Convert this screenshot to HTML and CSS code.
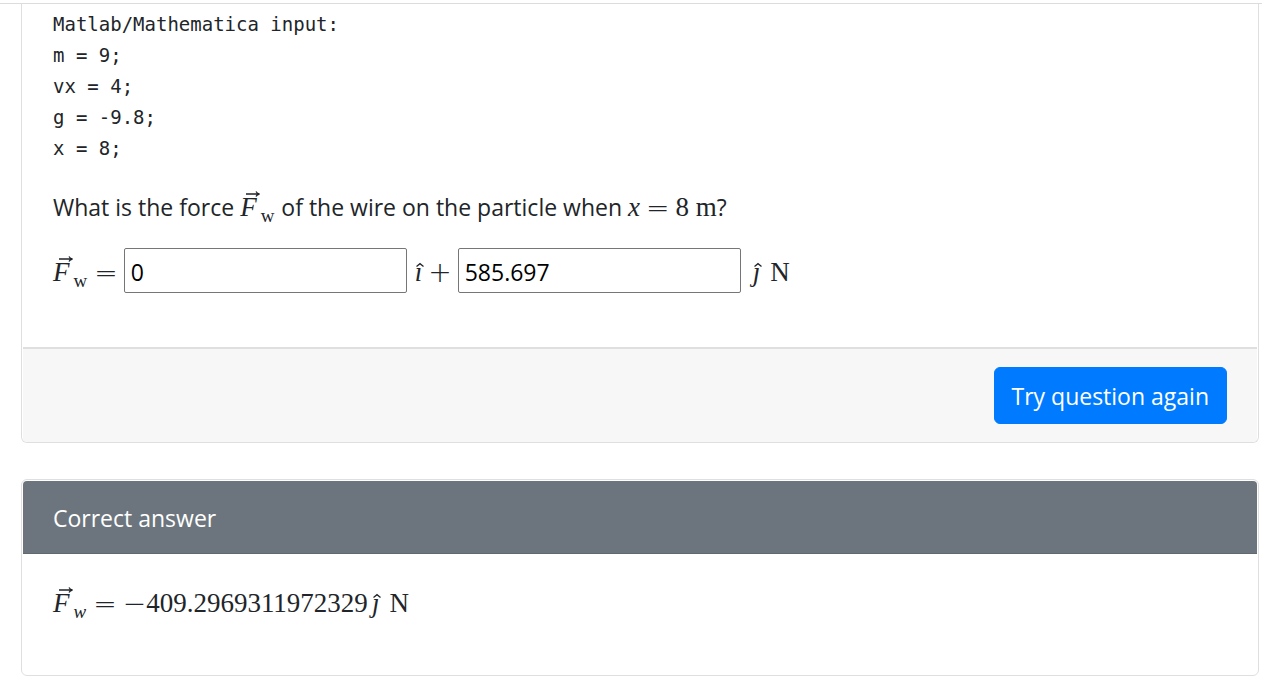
FILE: index.html
```html
<!DOCTYPE html>
<html lang="en">
<head>
    <meta charset="UTF-8">
    <meta name="viewport" content="width=device-width, initial-scale=1.0">
    <title>Question</title>
    <link rel="stylesheet" href="styles.css">
</head>
<body>

    <div class="top-bar"></div>

    <main class="content">
        <form class="card question-card">
            <div class="card-body">
<pre class="code-input">Matlab/Mathematica input:
m = 9;
vx = 4;
g = -9.8;
x = 8;</pre>
                <p class="prompt">What is the force <span class="math"><span class="accent"><i>F</i><svg class="vec" viewBox="0 0 14 6"><path d="M0 3H13M10 0.5Q11 2.5 13.5 3Q11 3.5 10 5.5"/></svg></span><sub>w</sub></span> of the wire on the particle when <span class="math"><i>x</i><span class="rel">=</span>8 m</span>?</p>

                <div class="answer-row">
                    <label class="math" for="force-x"><span class="accent"><i>F</i><svg class="vec" viewBox="0 0 14 6"><path d="M0 3H13M10 0.5Q11 2.5 13.5 3Q11 3.5 10 5.5"/></svg></span><sub>w</sub><span class="rel">=</span></label>
                    <input type="text" id="force-x" value="0">
                    <label class="math unit" for="force-y"><span class="accent"><i>ı</i><svg class="hat" viewBox="0 0 8 4"><path d="M0.5 3.5L4 0.7L7.5 3.5"/></svg></span><span class="rel">+</span></label>
                    <input type="text" id="force-y" value="585.697">
                    <span class="math unit"><span class="accent dotless-j"><i>ȷ</i><svg class="hat" viewBox="0 0 8 4"><path d="M0.5 3.5L4 0.7L7.5 3.5"/></svg></span><span class="newton">N</span></span>
                </div>
            </div>
            <div class="card-footer">
                <button type="button" class="btn-primary">Try question again</button>
            </div>
        </form>

        <section class="card">
            <h2 class="card-header">Correct answer</h2>
            <div class="card-body solution">
                <span class="math"><span class="accent"><i>F</i><svg class="vec" viewBox="0 0 14 6"><path d="M0 3H13M10 0.5Q11 2.5 13.5 3Q11 3.5 10 5.5"/></svg></span><sub><i>w</i></sub><span class="rel">=</span><span class="sign">−</span>409.2969311972329<span class="accent dotless-j"><i>ȷ</i><svg class="hat" viewBox="0 0 8 4"><path d="M0.5 3.5L4 0.7L7.5 3.5"/></svg></span><span class="newton">N</span></span>
            </div>
        </section>
    </main>

</body>
</html>
```

FILE: styles.css
```css
* { box-sizing: border-box; }
body {
    margin: 0; background-color: #fff; color: #212529;
    font-family: "Open Sans", "Noto Sans", sans-serif; font-size: 23px; line-height: 36px;
}
.top-bar { height: 4px; border-bottom: 1px solid #dcdcdc; }
.content { margin: 0 3px 0 21px; }

.card { padding: 1px; border: 1px solid #dfdfdf; border-radius: 6px; margin-bottom: 36px; }
.question-card { padding: 0 1px; border-top: 0; border-top-left-radius: 0; border-top-right-radius: 0; }
.card-body { padding: 5px 30px 54px; }
.card-header {
    margin: 0; padding: 19px 30px 17px; background-color: #6c757d; color: #fff;
    border-bottom: 1px solid #616970; border-radius: 4px 4px 0 0; font-size: 23px; font-weight: 400;
}
.card-footer {
    display: flex; justify-content: flex-end; padding: 18px 30px;
    background-color: #f7f7f7; border-top: 2px solid #dfdfdf; border-radius: 0 0 4px 4px;
}

.code-input { margin: 0 0 25px; font-family: "DejaVu Sans Mono", monospace; font-size: 19px; line-height: 31px; }
.prompt { margin: 0 0 23px; }

.math { font-family: "Liberation Serif", serif; font-size: 27px; line-height: 36px; white-space: nowrap; }
.math sub { margin: 0 1px 0 4px; font-size: 19px; line-height: 0; vertical-align: -6px; }
.rel, .sign {
    font-family: "DejaVu Sans Light", "DejaVu Sans", sans-serif; font-size: 28px;
    font-weight: 200; line-height: 0; vertical-align: -1px;
}
.rel { margin: 0 6px; }
.accent { position: relative; }
.accent svg { position: absolute; fill: none; stroke: currentColor; stroke-width: 1.3; overflow: visible; }
.vec { width: 14px; height: 6px; left: 6px; top: -1px; }
.hat { width: 8px; height: 4px; left: 1px; top: 6px; }
.dotless-j { margin-left: 4px; }
.newton { margin-left: 10px; }

.answer-row { display: flex; align-items: baseline; }
.answer-row input {
    width: 283px; height: 45px; padding: 2px 6px 0; border: 1px solid #767676; border-radius: 2px;
    background-color: #fff; color: #000; font: inherit;
}
.unit { padding-left: 8px; }

.btn-primary {
    padding: 10px 17px 9px; border: 1px solid #007bff; border-radius: 6px;
    background-color: #007bff; color: #fff; font: inherit; cursor: pointer;
}
.solution { padding: 31px 30px 53px; }
```
